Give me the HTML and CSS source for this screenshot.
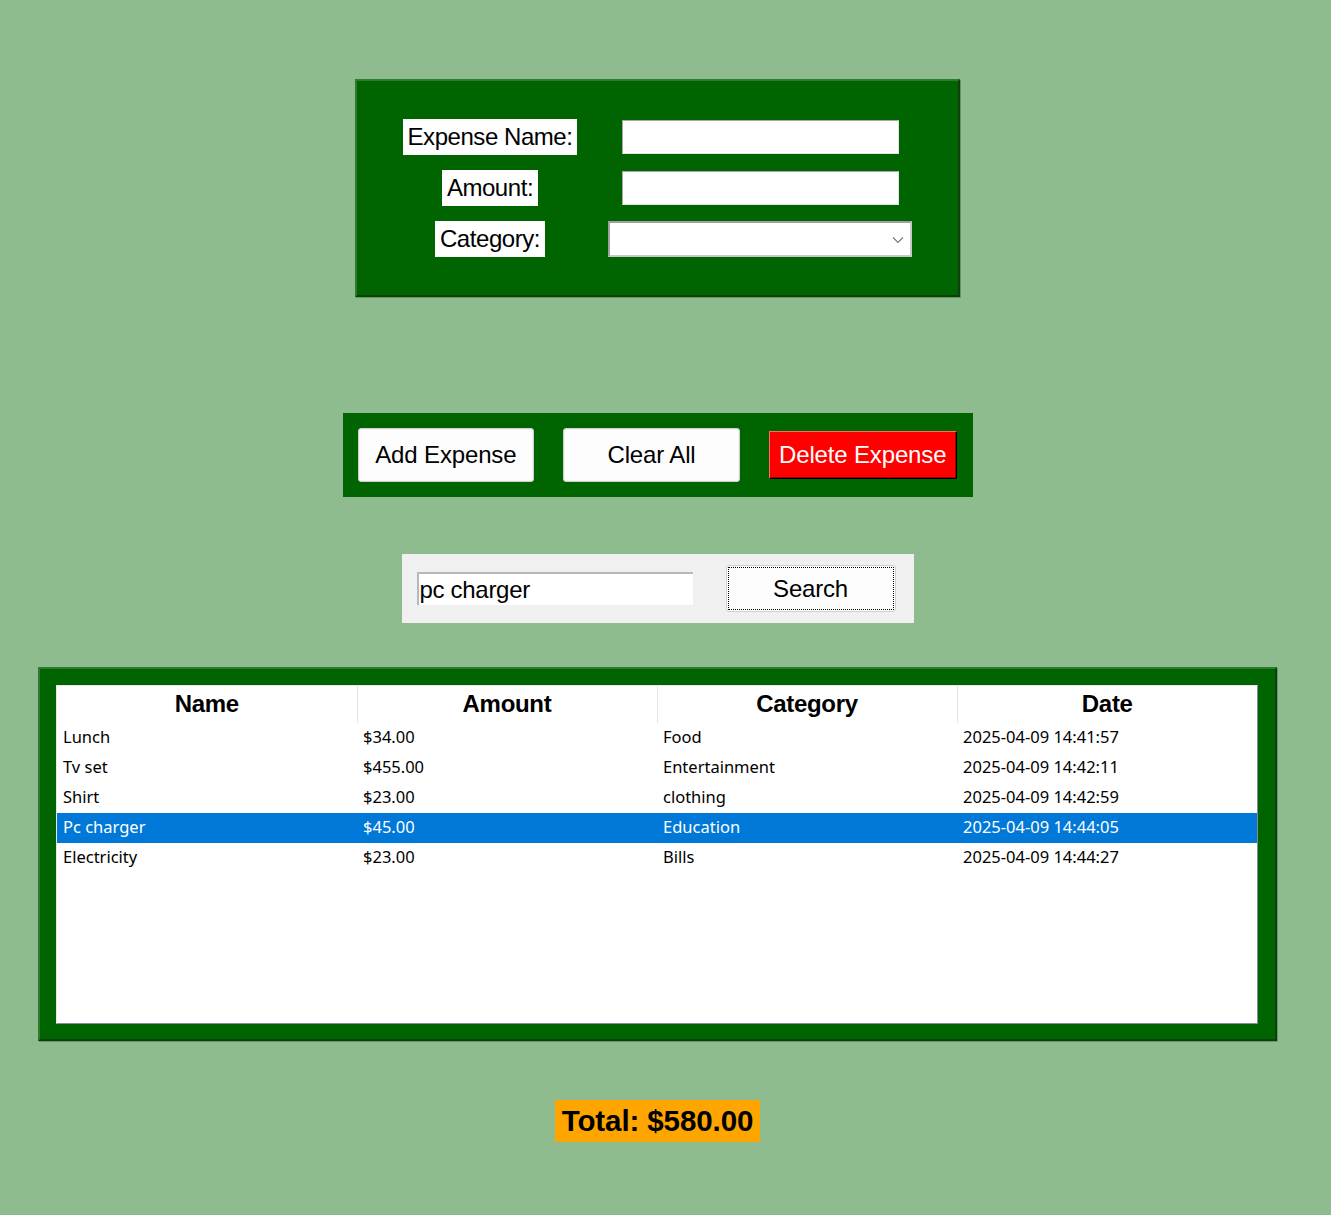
FILE: index.html
```html
<!DOCTYPE html>
<html>
<head>
<meta charset="utf-8">
<title>Expense Tracker</title>
<link rel="stylesheet" href="styles.css">
</head>
<body>
<div class="app">
  <div class="form-frame">
    <div class="form-label">Expense Name:</div>
    <input class="entry" type="text">
    <div class="form-label">Amount:</div>
    <input class="entry" type="text">
    <div class="form-label">Category:</div>
    <div class="combo">
      <svg class="chev" width="12" height="8" viewBox="0 0 12 8"><path d="M1 1.5 L6 6.5 L11 1.5" fill="none" stroke="#7a7a7a" stroke-width="1.2"/></svg>
    </div>
  </div>

  <div class="btn-frame">
    <button class="btn">Add Expense</button>
    <button class="btn">Clear All</button>
    <button class="btn btn-del">Delete Expense</button>
  </div>

  <div class="search-frame">
    <div class="search-entry">pc charger</div>
    <button class="btn-search">Search</button>
  </div>

  <div class="table-frame">
    <div class="tree">
      <table class="grid">
        <thead>
          <tr><th>Name</th><th>Amount</th><th>Category</th><th class="last">Date</th></tr>
        </thead>
        <tbody>
          <tr><td>Lunch</td><td>$34.00</td><td>Food</td><td>2025-04-09 14:41:57</td></tr>
          <tr><td>Tv set</td><td>$455.00</td><td>Entertainment</td><td>2025-04-09 14:42:11</td></tr>
          <tr><td>Shirt</td><td>$23.00</td><td>clothing</td><td>2025-04-09 14:42:59</td></tr>
          <tr class="sel"><td>Pc charger</td><td>$45.00</td><td>Education</td><td>2025-04-09 14:44:05</td></tr>
          <tr><td>Electricity</td><td>$23.00</td><td>Bills</td><td>2025-04-09 14:44:27</td></tr>
        </tbody>
      </table>
    </div>
  </div>

  <div class="total">Total: $580.00</div>
</div>
</body>
</html>
```
FILE: styles.css
```css
html, body {
  margin: 0;
  padding: 0;
  background: #8fbc8f;
}
body {
  min-height: 1215px;
  font-family: "Liberation Sans", Arial, sans-serif;
  color: #000;
}
.app {
  width: 1315px;
  display: flex;
  flex-direction: column;
  align-items: center;
  padding-top: 79px;
}

/* form */
.form-frame {
  box-sizing: border-box;
  width: 605px;
  height: 218px;
  background: #006400;
  border: 2px solid;
  border-color: #2f7a2f #0f3f0f #0f3f0f #2f7a2f;
  box-shadow: 1px 1px 0 #5f9a5f;
  display: grid;
  grid-template-columns: 180px 304px;
  grid-auto-rows: 36px;
  column-gap: 28px;
  row-gap: 15px;
  padding: 38px 46px 0 43px;
  justify-items: center;
  align-items: center;
}
.form-label {
  background: #fff;
  height: 36px;
  line-height: 36px;
  padding: 0 5px;
  font-size: 24px;
  letter-spacing: -0.45px;
  box-sizing: border-box;
  white-space: nowrap;
}
.entry {
  box-sizing: border-box;
  width: 277px;
  height: 34px;
  margin: 0;
  background: #fff;
  border: 1px solid;
  border-color: #a8a8a8 #e3e3e3 #e3e3e3 #a8a8a8;
  outline: none;
}
.combo {
  box-sizing: border-box;
  position: relative;
  width: 304px;
  height: 36px;
  background: #fff;
  border: 2px solid;
  border-color: #a0a0a0 #c8c8c8 #c8c8c8 #a0a0a0;
}
.chev {
  position: absolute;
  right: 6px;
  top: 13px;
}

/* buttons */
.btn-frame {
  box-sizing: border-box;
  margin-top: 116px;
  width: 630px;
  height: 84px;
  background: #006400;
  display: flex;
  align-items: center;
  padding: 0 16px 0 15px;
  gap: 29px;
}
.btn {
  box-sizing: border-box;
  width: 177px;
  height: 54px;
  margin: 0;
  font-family: "Liberation Sans", Arial, sans-serif;
  font-size: 24px;
  letter-spacing: -0.15px;
  color: #000;
  background: #fdfdfd;
  border: 1px solid #cfcfcf;
  border-radius: 3px;
  box-shadow: inset 0 0 0 1px #f4f4f4;
  padding: 0;
}
.btn-del {
  width: 188px;
  height: 48px;
  background: #ff0000;
  color: #fff;
  border-radius: 0;
  border: 1px solid;
  border-color: #ff6a6a #000 #000 #ff6a6a;
  box-shadow: inset -1px -1px 0 #a00000;
}

/* search */
.search-frame {
  box-sizing: border-box;
  margin-top: 57px;
  width: 512px;
  height: 69px;
  background: #f0f0f0;
  display: flex;
  align-items: center;
  padding-left: 15px;
  gap: 33px;
}
.search-entry {
  box-sizing: border-box;
  width: 276px;
  height: 33px;
  background: #fff;
  border-top: 2px solid #b8b8b8;
  border-left: 2px solid #b8b8b8;
  font-size: 24px;
  line-height: 31px;
  padding-left: 1px;
  letter-spacing: -0.3px;
}
.btn-search {
  box-sizing: border-box;
  width: 170px;
  height: 47px;
  margin: 0;
  font-family: "Liberation Sans", Arial, sans-serif;
  font-size: 24px;
  letter-spacing: -0.2px;
  color: #000;
  background: #fdfdfd;
  border: 1px solid #d0d0d0;
  border-radius: 3px;
  outline: 1px dotted #000;
  outline-offset: -3px;
  padding: 0;
}

/* table */
.table-frame {
  box-sizing: border-box;
  margin-top: 44px;
  width: 1239px;
  height: 374px;
  background: #006400;
  border: 2px solid;
  border-color: #2f7a2f #0f3f0f #0f3f0f #2f7a2f;
  box-shadow: 1px 1px 0 #5f9a5f;
  padding: 16px 15px 15px 16px;
}
.tree {
  box-sizing: border-box;
  width: 1202px;
  height: 339px;
  background: #fff;
  border: 1px solid;
  border-color: #e8e8e8 #8a8a9a #8a8a9a #e8e8e8;
  overflow: hidden;
}
.grid {
  border-collapse: collapse;
  table-layout: fixed;
  width: 1200px;
}
.grid th {
  width: 300px;
  height: 37px;
  padding: 0 0 2px 0;
  font-family: "Liberation Sans", Arial, sans-serif;
  font-weight: bold;
  font-size: 24px;
  letter-spacing: -0.3px;
  text-align: center;
  vertical-align: middle;
  border-right: 1px solid #e5e5e5;
  box-sizing: border-box;
}
.grid th.last {
  border-right: none;
}
.grid td {
  height: 30px;
  padding: 0 0 3px 6px;
  box-sizing: border-box;
  font-family: "Noto Sans", "Segoe UI", sans-serif;
  font-size: 16.5px;
  color: #000;
  white-space: nowrap;
  vertical-align: middle;
}
.grid tr.sel td {
  background: #0078d7;
  color: #fff;
}

/* total */
.total {
  margin-top: 59px;
  background: #ffa500;
  height: 42px;
  line-height: 42px;
  padding: 0 7px;
  font-weight: bold;
  font-size: 29.5px;
  letter-spacing: -0.1px;
}
```
